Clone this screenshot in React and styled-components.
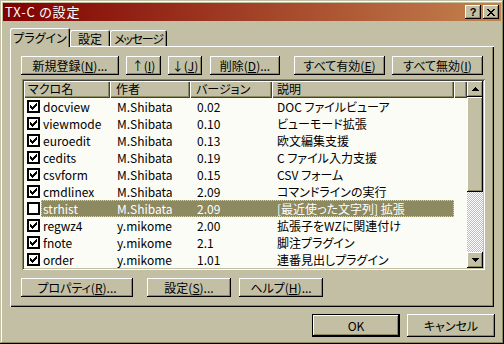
import React from 'react';
import styled, { createGlobalStyle } from 'styled-components';

const FACE = '#c2bfa5';
const SHADOW = '#8d8961';
const DARK = '#000000';
const LIGHT = '#ffffff';
const SEL = '#8d8961';
const LISTBG = '#fbfcf6';
const FONT = '"Noto Sans CJK JP", "Noto Sans", sans-serif';

const Global = createGlobalStyle`
  html, body { margin: 0; padding: 0; background: ${FACE}; }
  body { font-family: ${FONT}; font-size: 12px; }
  * { box-sizing: border-box; }
`;

const raised = `
  box-shadow: inset -1px -1px ${DARK}, inset 1px 1px ${LIGHT},
    inset -2px -2px ${SHADOW}, inset 2px 2px ${FACE};
`;

const Window = styled.div`
  width: 504px;
  height: 344px;
  padding: 3px;
  background: ${FACE};
  box-shadow: inset -1px -1px ${DARK}, inset 1px 1px ${FACE},
    inset -2px -2px ${SHADOW}, inset 2px 2px ${LIGHT};
  display: flex;
  flex-direction: column;
  font-family: ${FONT};
  font-feature-settings: "palt";
  font-size: 12px;
  color: #000;
`;

const TitleBar = styled.div`
  height: 18px;
  display: flex;
  align-items: center;
  padding: 0 2px 0 2px;
  background: linear-gradient(to right, #800000, #c4824e);
  color: #fff;
`;

const TitleText = styled.span`
  font-size: 13px;
  line-height: 18px;
  letter-spacing: 0.8px;
`;

const TitleButtons = styled.div`
  margin-left: auto;
  display: flex;
  gap: 2px;
`;

const CapButton = styled.div`
  width: 16px;
  height: 14px;
  background: ${FACE};
  ${raised}
  display: flex;
  align-items: center;
  justify-content: center;
  color: #000;
  font-family: "Liberation Sans", sans-serif;
  font-weight: bold;
  font-size: 11px;
  line-height: 14px;
`;

const Client = styled.div`
  flex: 1;
  display: flex;
  flex-direction: column;
  padding: 7px 6px 0 7px;
`;

const TabStrip = styled.div`
  height: 18px;
  display: flex;
  align-items: flex-end;
  position: relative;
  z-index: 1;
`;

const Tab = styled.div`
  width: ${(p) => p.$w}px;
  height: ${(p) => (p.$active ? 19 : 16)}px;
  margin-bottom: ${(p) => (p.$active ? -1 : 0)}px;
  background: ${FACE};
  border-radius: 2px 2px 0 0;
  box-shadow: inset 1px 1px ${LIGHT}, inset -1px 0 ${DARK}, inset -2px 0 ${SHADOW};
  display: flex;
  align-items: center;
  justify-content: center;
  padding-top: ${(p) => (p.$active ? 0 : 1)}px;
  line-height: 14px;
  letter-spacing: ${(p) => p.$ls || 0}px;
  white-space: nowrap;
`;

const Panel = styled.div`
  width: 484px;
  height: 261px;
  margin-right: 2px;
  background: ${FACE};
  box-shadow: inset 1px 1px ${LIGHT}, inset -1px -1px ${DARK}, inset -2px -2px ${SHADOW};
  display: flex;
  flex-direction: column;
  padding: 10px 0 0 11px;
`;

const ButtonRow = styled.div`
  display: flex;
  gap: ${(p) => p.$gap || 7}px;
`;

const Button = styled.div`
  width: ${(p) => p.$w}px;
  height: ${(p) => p.$h || 19}px;
  margin-left: ${(p) => p.$ml || 0}px;
  background: ${FACE};
  ${raised}
  display: flex;
  align-items: center;
  justify-content: center;
  white-space: nowrap;
  line-height: 14px;
  ${(p) => p.$default && `border: 1px solid ${DARK};`}
  u { text-decoration: underline; text-underline-offset: 1px; }
`;

const List = styled.div`
  width: 463px;
  height: 191px;
  margin: 4px 0 0 1px;
  padding: 2px;
  background: ${LISTBG};
  box-shadow: inset 1px 1px ${SHADOW}, inset -1px -1px ${LIGHT},
    inset 2px 2px #404040, inset -2px -2px ${FACE};
  display: flex;
`;

const TableArea = styled.div`
  flex: 1;
  display: flex;
  flex-direction: column;
  overflow: hidden;
`;

const HeaderRow = styled.div`
  height: 17px;
  display: flex;
  flex: none;
`;

const HeaderCell = styled.div`
  width: ${(p) => p.$w}px;
  flex: none;
  background: ${FACE};
  box-shadow: inset 1px 1px ${LIGHT}, inset -1px -1px #404040, inset -2px -2px ${SHADOW};
  padding-left: ${(p) => p.$pad}px;
  line-height: 16px;
  white-space: nowrap;
  overflow: hidden;
`;

const Row = styled.div`
  height: 17px;
  display: flex;
  flex: none;
  line-height: 17px;
`;

const CheckCell = styled.div`
  width: 17px;
  flex: none;
  display: flex;
  align-items: center;
  padding-left: 3px;
`;

const CheckBox = styled.div`
  width: 13px;
  height: 13px;
  border: 2px solid #000;
  background: #fff;
  display: flex;
  align-items: center;
  justify-content: center;
`;

const RowMain = styled.div`
  display: flex;
  background: ${(p) => (p.$sel ? SEL : 'transparent')};
  color: ${(p) => (p.$sel ? '#fff' : '#000')};
  outline: ${(p) => (p.$sel ? `1px dotted #d8d4b8` : 'none')};
  outline-offset: -1px;
`;

const Cell = styled.div`
  width: ${(p) => p.$w}px;
  flex: none;
  padding-left: ${(p) => p.$pad}px;
  white-space: nowrap;
  overflow: hidden;
`;

const ScrollBar = styled.div`
  width: 16px;
  flex: none;
  display: flex;
  flex-direction: column;
`;

const ScrollButton = styled.div`
  width: 16px;
  height: 16px;
  flex: none;
  background: ${FACE};
  ${raised}
  display: flex;
  align-items: center;
  justify-content: center;
`;

const Thumb = styled.div`
  height: 95px;
  flex: none;
  background: ${FACE};
  ${raised}
`;

const Track = styled.div`
  flex: 1;
  background: repeating-conic-gradient(#ffffff 0 25%, ${FACE} 0 50%) 0 0 / 2px 2px;
`;

const BottomRow = styled(ButtonRow)`
  margin-top: 8px;
`;

const DialogButtons = styled.div`
  display: flex;
  justify-content: flex-end;
  gap: 7px;
  margin-top: 7px;
`;

const Check = () => (
  <svg width="9" height="9" viewBox="0 0 9 9" shapeRendering="crispEdges">
    <path d="M1 3h1v1h1v1h1v-1h1v-1h1v-1h1v-1h1v3h-1v1h-1v1h-1v1h-1v1h-1v-1h-1v-1h-1z" fill="#000" />
  </svg>
);

const Arrow = ({ down }) => (
  <svg width="7" height="4" viewBox="0 0 7 4" shapeRendering="crispEdges">
    {down ? (
      <path d="M0 0h7v1h-1v1h-1v1h-1v1h-1v-1h-1v-1h-1v-1h-1z" fill="#000" />
    ) : (
      <path d="M3 0h1v1h1v1h1v1h1v1h-7v-1h1v-1h1v-1h1z" fill="#000" />
    )}
  </svg>
);

const CloseGlyph = () => (
  <svg width="8" height="7" viewBox="0 0 8 7" shapeRendering="crispEdges">
    <path d="M0 0h2v1h1v1h2v-1h1v-1h2v1h-1v1h-1v1h-1v1h1v1h1v1h1v1h-2v-1h-1v-1h-2v1h-1v1h-2v-1h1v-1h1v-1h1v-1h-1v-1h-1v-1h-1z" fill="#000" />
  </svg>
);

const COLS = [
  { w: 86, pad: 4, label: 'マクロ名' },
  { w: 80, pad: 6, label: '作者' },
  { w: 82, pad: 6, label: 'バージョン' },
  { w: 182, pad: 5, label: '説明' },
];

const rows = [
  ['docview', 'M.Shibata', '0.02', 'DOC ファイルビューア', true],
  ['viewmode', 'M.Shibata', '0.10', 'ビューモード拡張', true],
  ['euroedit', 'M.Shibata', '0.13', '欧文編集支援', true],
  ['cedits', 'M.Shibata', '0.19', 'C ファイル入力支援', true],
  ['csvform', 'M.Shibata', '0.15', 'CSV フォーム', true],
  ['cmdlinex', 'M.Shibata', '2.09', 'コマンドラインの実行', true],
  ['strhist', 'M.Shibata', '2.09', '[最近使った文字列] 拡張', false, true],
  ['regwz4', 'y.mikome', '2.00', '拡張子をWZに関連付け', true],
  ['fnote', 'y.mikome', '2.1', '脚注プラグイン', true],
  ['order', 'y.mikome', '1.01', '連番見出しプラグイン', true],
];

export default function App() {
  return (
    <>
      <Global />
      <Window>
        <TitleBar>
          <TitleText>TX-C の設定</TitleText>
          <TitleButtons>
            <CapButton>?</CapButton>
            <CapButton>
              <CloseGlyph />
            </CapButton>
          </TitleButtons>
        </TitleBar>
        <Client>
          <TabStrip>
            <Tab $w={60} $active>プラグイン</Tab>
            <Tab $w={40}>設定</Tab>
            <Tab $w={57} $ls={-1.2}>メッセージ</Tab>
          </TabStrip>
          <Panel>
            <ButtonRow>
              <Button $w={98}>新規登録(<u>N</u>)...</Button>
              <Button $w={35}>↑(<u>I</u>)</Button>
              <Button $w={34}>↓(<u>J</u>)</Button>
              <Button $w={70} $ml={1}>削除(<u>D</u>)...</Button>
              <Button $w={91} $ml={7}>すべて有効(<u>E</u>)</Button>
              <Button $w={91}>すべて無効(<u>I</u>)</Button>
            </ButtonRow>
            <List>
              <TableArea>
                <HeaderRow>
                  {COLS.map((c) => (
                    <HeaderCell key={c.label} $w={c.w} $pad={c.pad}>
                      {c.label}
                    </HeaderCell>
                  ))}
                  <HeaderCell $w={13} $pad={0} />
                </HeaderRow>
                {rows.map(([name, author, ver, desc, checked, sel]) => (
                  <Row key={name}>
                    <CheckCell>
                      <CheckBox>{checked && <Check />}</CheckBox>
                    </CheckCell>
                    <RowMain $sel={sel}>
                      <Cell $w={69} $pad={2}>{name}</Cell>
                      <Cell $w={80} $pad={7}>{author}</Cell>
                      <Cell $w={82} $pad={7}>{ver}</Cell>
                      <Cell $w={182} $pad={5}>{desc}</Cell>
                    </RowMain>
                  </Row>
                ))}
              </TableArea>
              <ScrollBar>
                <ScrollButton>
                  <Arrow />
                </ScrollButton>
                <Thumb />
                <Track />
                <ScrollButton>
                  <Arrow down />
                </ScrollButton>
              </ScrollBar>
            </List>
            <BottomRow>
              <Button $w={112}>プロパティ(<u>R</u>)...</Button>
              <Button $w={84} $ml={7}>設定(<u>S</u>)...</Button>
              <Button $w={84} $ml={1}>ヘルプ(<u>H</u>)...</Button>
            </BottomRow>
          </Panel>
          <DialogButtons>
            <Button $w={88} $h={23} $default>OK</Button>
            <Button $w={88} $h={23}>キャンセル</Button>
          </DialogButtons>
        </Client>
      </Window>
    </>
  );
}
